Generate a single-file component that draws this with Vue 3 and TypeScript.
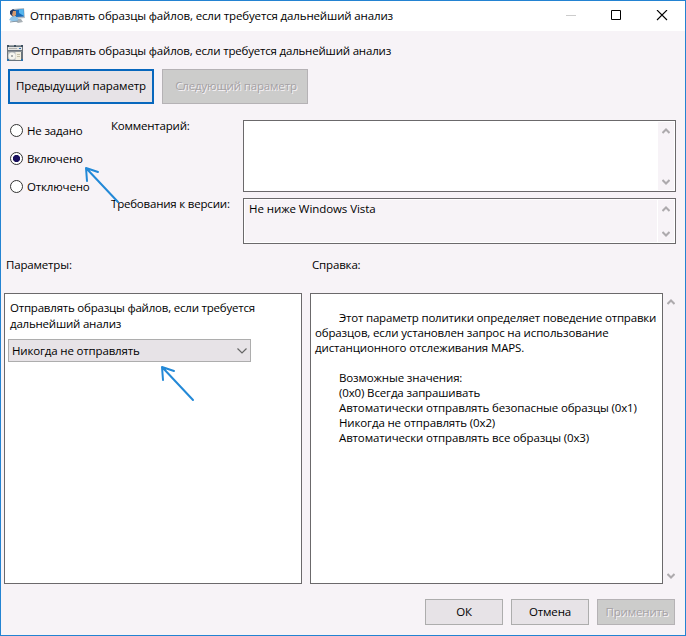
<script setup lang="ts">
import { ref } from 'vue'

interface Choice { id: string; label: string }

const title = 'Отправлять образцы файлов, если требуется дальнейший анализ'
const choices: Choice[] = [
  { id: 'unset', label: 'Не задано' },
  { id: 'on', label: 'Включено' },
  { id: 'off', label: 'Отключено' },
]
const state = ref('on')
const intro: string[] = [
  'Этот параметр политики определяет поведение отправки',
  'образцов, если установлен запрос на использование',
  'дистанционного отслеживания MAPS.',
]
const values: string[] = [
  'Возможные значения:',
  '(0x0) Всегда запрашивать',
  'Автоматически отправлять безопасные образцы (0x1)',
  'Никогда не отправлять (0x2)',
  'Автоматически отправлять все образцы (0x3)',
]
</script>

<template>
  <main class="window">
    <header class="titlebar">
      <svg class="app-icon" width="16" height="16" viewBox="0 0 16 16">
        <path d="M4 1l11-1 1 10-10 1z" fill="#b4bcc3" />
        <path d="M6 2l8.500-1 .5 7.500L7 9z" fill="#1769b8" />
        <path d="M10 1.500l4.500-.5.500 7L10 5z" fill="#55b5ed" />
        <path d="M8 11h4l2 3-5 1-3-2z" fill="#a8b0b5" />
        <path d="M1 3l3-2 3 2v5l-3 1-3-3z" fill="#203761" />
        <path d="M4 3l3 0 0 4-2 2-2-2z" fill="#d49b70" />
        <path d="M0 12l2-3 4-1 3 2v3l-4 1z" fill="#8fc5e9" />
        <path d="M1 14l8-1" stroke="#8799a8" />
      </svg>
      <span class="title">{{ title }}</span>
      <svg class="controls" width="104" height="12" viewBox="0 0 104 12">
        <path d="M0 5.500h10" stroke="#ccc" />
        <path d="M45.500 .5h9v9h-9z" fill="none" stroke="#000" />
        <path d="M91 0l10 10M101 0L91 10" stroke="#000" stroke-width="1.100" />
      </svg>
    </header>

    <section class="heading">
      <svg class="policy-icon" width="16" height="16" viewBox="0 0 16 16">
        <path d="M0 0h16v16H0z" fill="#6a737c" />
        <path d="M0 0h2v2H0zM7 0h2v2H7zM14 0h2v2h-2z" fill="#3d4f60" />
        <path d="M2 0h5v1H2zM9 0h5v1H9z" fill="#9aa1a6" />
        <path d="M1 2h14v3H1z" fill="#e4e4e2" />
        <path d="M2 3.500h8" stroke="#b0b0ae" />
        <path d="M12 3h2v1h-2z" fill="#2b6cb0" />
        <path d="M1 6h14v1H1z" fill="#8a9197" />
        <path d="M1 7h8v8H1z" fill="#b5babd" />
        <circle cx="5" cy="11" r="3.500" fill="#f5f5ee" />
        <circle cx="5" cy="11" r="1" fill="#92979b" />
        <path d="M8.500 7H14v8H8.500z" fill="#f1eee0" />
        <path d="M10 9.500h3M10 11.500h3" stroke="#c4c0a8" />
        <path d="M0 14h2v2H0zM14 14h2v2h-2z" fill="#2a70ac" />
      </svg>
      <span class="heading-text">{{ title }}</span>
    </section>

    <nav class="navigation">
      <button class="button focused" type="button"><span class="prev-text">Предыдущий параметр</span></button>
      <button class="button" type="button" disabled><span class="next-text">Следующий параметр</span></button>
    </nav>

    <section class="settings">
      <div class="choices">
        <label v-for="choice in choices" :key="choice.id" class="choice">
          <input v-model="state" class="radio" type="radio" name="state" :value="choice.id">
          <span>{{ choice.label }}</span>
        </label>
      </div>
      <div class="fields">
        <span class="field-label">Комментарий:</span>
        <div class="field comment">
          <div class="field-text"></div>
          <div class="scrollbar">
            <svg width="8" height="6" viewBox="0 0 8 6"><path d="M.5 5L4 1.500 7.500 5" /></svg>
            <svg width="8" height="6" viewBox="0 0 8 6"><path d="M.5 1L4 4.500 7.500 1" /></svg>
          </div>
        </div>
        <span class="field-label version-label">Требования к версии:</span>
        <div class="field version">
          <div class="field-text"><span class="vista">Не ниже Windows Vista</span></div>
          <div class="scrollbar">
            <svg width="8" height="6" viewBox="0 0 8 6"><path d="M.5 5L4 1.500 7.500 5" /></svg>
            <svg width="8" height="6" viewBox="0 0 8 6"><path d="M.5 1L4 4.500 7.500 1" /></svg>
          </div>
        </div>
      </div>
    </section>

    <section class="captions"><span>Параметры:</span><span>Справка:</span></section>

    <section class="panels">
      <div class="panel options">
        <div class="option-label"><span class="line">Отправлять образцы файлов, если требуется</span><span class="line">дальнейший анализ</span></div>
        <button class="combo" type="button">
          <span>Никогда не отправлять</span>
          <svg width="10" height="6" viewBox="0 0 10 6"><path d="M.5 .5L5 5 9.500 .5" fill="none" stroke="#666" stroke-width="1.200" /></svg>
        </button>
      </div>
      <div class="panel help">
        <p class="intro"><span v-for="line in intro" :key="line" class="line">{{ line }}</span></p>
        <p class="values"><span v-for="line in values" :key="line" class="line">{{ line }}</span></p>
      </div>
      <div class="scrollbar help-scroll">
        <svg width="8" height="6" viewBox="0 0 8 6"><path d="M.5 5L4 1.500 7.500 5" /></svg>
        <svg width="8" height="6" viewBox="0 0 8 6"><path d="M.5 1L4 4.500 7.500 1" /></svg>
      </div>
    </section>

    <footer class="actions">
      <button class="button" type="button"><span>ОК</span></button>
      <button class="button" type="button"><span>Отмена</span></button>
      <button class="button" type="button" disabled><span class="apply-text">Применить</span></button>
    </footer>

    <svg class="arrow arrow-state" width="36" height="38" viewBox="0 0 36 38">
      <path d="M34 36L2 2M14 6L2 2l1 13" />
    </svg>
    <svg class="arrow arrow-combo" width="36" height="38" viewBox="0 0 36 38">
      <path d="M33 35L2 2M14 6L2 2l1 13" />
    </svg>
  </main>
</template>

<style>
body { margin: 0; }
</style>

<style scoped>
* { box-sizing: border-box; }
.window { position: relative; width: 686px; height: 636px; border: 1px solid #2383d2; background: #f7f3f7; display: flex; flex-direction: column; font: 11.5px/16px "Open Sans", "Noto Sans", sans-serif; color: #000; white-space: nowrap; overflow: hidden; letter-spacing: -.16px; }
svg { display: block; flex: none; }
button { font: inherit; letter-spacing: inherit; color: inherit; padding: 0; margin: 0; }
.titlebar { height: 30px; flex: none; background: #fff; display: flex; align-items: center; padding: 0 15px 0 8px; }
.title { margin-left: 5px; letter-spacing: -.14px; }
.controls { margin-left: auto; }
.heading { height: 38px; flex: none; display: flex; align-items: flex-start; padding: 12px 0 0 6px; }
.policy-icon { margin-top: 2px; }
.heading-text { margin-left: 8px; letter-spacing: -.19px; }
.navigation { display: flex; gap: 8px; padding-left: 7px; height: 35px; flex: none; }
.button { width: 78px; height: 26px; border: 1px solid #adadad; background: #e7e3e7; display: flex; align-items: center; justify-content: center; }
.navigation .button { width: 146px; height: 35px; }
.navigation .button span { margin-top: -1px; }
.prev-text { letter-spacing: -.1px; }
.next-text { margin-left: 2px; }
.apply-text { margin-left: 2px; }
.button.focused { border: 2px solid #0867bd; }
.button:disabled { background: #cccccb; border-color: #b5b2b5; color: #a5a2a5; text-shadow: 1px 1px 0 #f7f3f7; }
.settings { display: flex; height: 141px; flex: none; padding-top: 16px; }
.choices { width: 109px; padding: 3px 0 0 9px; display: flex; flex-direction: column; gap: 12px; }
.choice { height: 16px; display: flex; align-items: center; gap: 4px; }
.radio { appearance: none; width: 13px; height: 13px; margin: -1px 0 0; border: 1px solid #333; border-radius: 50%; background: #fff; }
.radio:checked { background: radial-gradient(circle, #190f5e 0 3.300px, #fff 3.900px); }
.fields { display: grid; grid-template-columns: 133px 433px; grid-template-rows: 72px 46px; row-gap: 6px; }
.field-label { margin-top: -2px; padding-left: 1px; letter-spacing: -.2px; }
.field { border: 1px solid #6b696b; background: #fff; display: flex; padding: 1px; }
.field-text { flex: 1; padding: 1px 4px; line-height: 16px; }
.vista { letter-spacing: -.07px; }
.version .field-text { background: #f7f3f7; margin-right: 1px; }
.scrollbar { width: 16px; background: #f7f3f7; display: flex; flex-direction: column; align-items: center; justify-content: space-between; padding: 6px 0 5px; }
.scrollbar path { fill: none; stroke: #adaaad; stroke-width: 2; }
.captions { height: 48px; flex: none; display: grid; grid-template-columns: 306px 1fr; padding: 12px 0 0 5px; }
.panels { display: flex; height: 291px; flex: none; padding-left: 3px; }
.panel { background: #fff; border: 1px solid #6b696b; }
.options { width: 298px; margin-right: 8px; padding: 6px 3px; }
.option-label { padding-left: 2px; letter-spacing: -.21px; }
.combo { width: 243px; height: 23px; margin-top: 7px; border: 1px solid #adadad; background: #e7e3e7; display: flex; align-items: center; justify-content: space-between; padding: 0 3px; }
.help { width: 353px; padding: 16px 4px; line-height: 15px; letter-spacing: -.14px; }
.help p { margin: 0; }
.line { display: block; }
.intro .line:first-child, .values { padding-left: 24px; }
.intro .line:first-child { letter-spacing: -.2px; }
.help .values { margin-top: 15px; }
.actions { display: flex; gap: 8px; margin-top: 15px; padding-right: 10px; justify-content: flex-end; }
.arrow { position: absolute; }
.arrow path { fill: none; stroke: #2389d7; stroke-width: 2; stroke-linecap: round; stroke-linejoin: round; }
.arrow-state { left: 83px; top: 165px; }
.arrow-combo { left: 159px; top: 364px; }
</style>
